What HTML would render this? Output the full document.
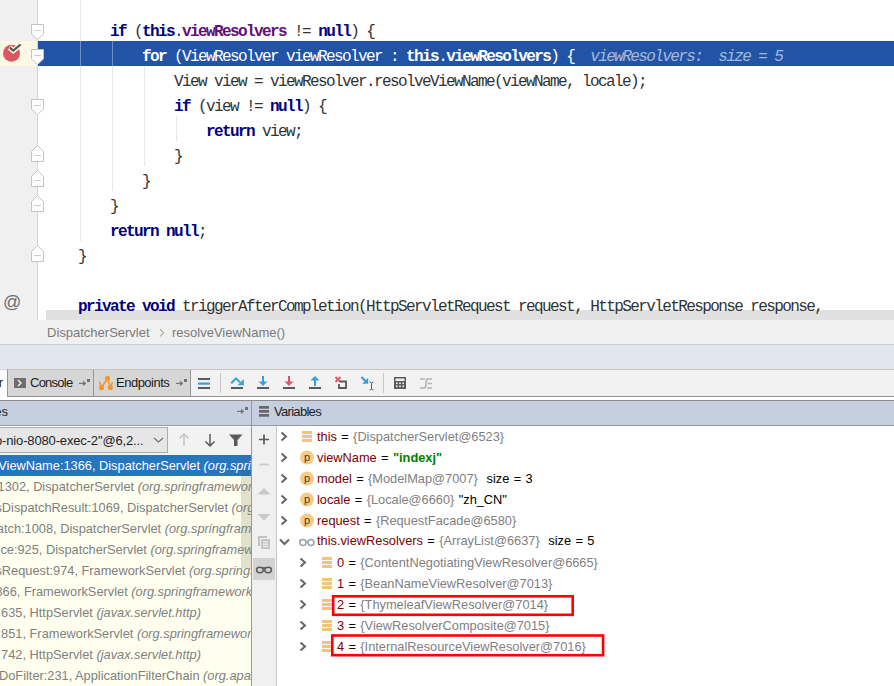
<!DOCTYPE html>
<html><head><meta charset="utf-8">
<style>
*{margin:0;padding:0;box-sizing:border-box}
html,body{width:894px;height:686px;overflow:hidden;background:#fff}
body{position:relative;font-family:"Liberation Sans",sans-serif}
.abs{position:absolute}
#editor{left:0;top:0;width:894px;height:320px;background:#fff;overflow:hidden}
#gutter{left:0;top:0;width:37px;height:320px;background:#f0f0f0}
#gline{left:37px;top:0;width:1px;height:320px;background:#d4d4d4}
.row{position:absolute;left:46px;height:25px;width:848px;white-space:pre;font-family:"Liberation Mono",monospace;font-size:16px;letter-spacing:-1.6px;line-height:25px;padding-top:4px;color:#333}
.row.ex,.row.ex .kw,.row.ex .fld{color:#fff}
.guide.ex{background:#6f8fc6}
.kw{color:#000080;font-weight:bold}
.fld{color:#660e7a;font-weight:bold}
.guide{position:absolute;width:1px;background:#e6e6e6}
#exec{left:38px;top:41px;width:856px;height:25px;background:#2154a6}
#execg{left:0;top:41px;width:37px;height:25px;background:#fdf8e6}
.inl{color:#a8b6d8;font-style:italic;font-weight:normal}
#hscroll{left:46px;top:310px;width:848px;height:10px;background:#e0e0e0}
#crumbs{left:0;top:320px;width:894px;height:25px;background:#f0f0f0;border-bottom:1px solid #c9c9c9}
.ui{font-family:"Liberation Sans",sans-serif;font-size:13px;white-space:pre;position:absolute}
#titlebar{left:0;top:345px;width:894px;height:25px;background:#e2e6ee;border-bottom:1px solid #cfd3da}
#tabs{left:0;top:370px;width:894px;height:30px;background:#fff}
#toolbar{left:190px;top:369px;width:704px;height:28px;background:#f2f2f2;border:1px solid #959595;border-top-color:#c6c6c6;border-right:none}
.tab{position:absolute;top:369px;height:28px;background:#d6d6d6;border:1px solid #959595;border-top-color:#c6c6c6}
#hdrline{left:0;top:400px;width:894px;height:1px;background:#8c8c8c}
#hdr{left:0;top:401px;width:894px;height:25px;background:#c5cfdf;border-bottom:1px solid #959ba5}
#frames{left:0;top:426px;width:251px;height:260px;background:#fffff0}
#combo-row{left:0;top:426px;width:251px;height:29px;background:#f2f2f2;border-top:1px solid #fff}
#divider{left:251px;top:401px;width:1px;height:285px;background:#999}
#vtool{left:252px;top:426px;width:25px;height:260px;background:#f0f0f0;border-right:1px solid #c8c8c8}
.fr{line-height:21px;font-size:12.8px}
.var{font-size:12.8px;line-height:16px;color:#000;word-spacing:0.8px}
.vn{color:#800000}
.vg{color:#808080}
.vs{color:#008000}
#vars{left:277px;top:426px;width:617px;height:260px;background:#fff}
</style></head><body>

<div id="editor" class="abs">
  <div id="gutter" class="abs"></div>
  <div id="execg" class="abs"></div>
  <div id="gline" class="abs"></div>
  <div id="exec" class="abs"></div>
  <svg class="abs" style="left:0;top:0" width="60" height="320"><path d="M31.5,24.5H43.5V34L37.5,39.5L31.5,34Z" fill="#fff" stroke="#c4c4c4"/><path d="M34,30.5H41" stroke="#cdcdcd"/><path d="M31.5,49.5H43.5V59L37.5,64.5L31.5,59Z" fill="#fff" stroke="#c4c4c4"/><path d="M34,55.5H41" stroke="#cdcdcd"/><path d="M31.5,99.5H43.5V109L37.5,114.5L31.5,109Z" fill="#fff" stroke="#c4c4c4"/><path d="M34,105.5H41" stroke="#cdcdcd"/><path d="M31.5,161.5H43.5V151.5L37.5,145.5L31.5,151.5Z" fill="#fff" stroke="#c4c4c4"/><path d="M34,155.5H41" stroke="#cdcdcd"/><path d="M31.5,186.5H43.5V176.5L37.5,170.5L31.5,176.5Z" fill="#fff" stroke="#c4c4c4"/><path d="M34,180.5H41" stroke="#cdcdcd"/><path d="M31.5,211.5H43.5V201.5L37.5,195.5L31.5,201.5Z" fill="#fff" stroke="#c4c4c4"/><path d="M34,205.5H41" stroke="#cdcdcd"/><path d="M31.5,261.5H43.5V251.5L37.5,245.5L31.5,251.5Z" fill="#fff" stroke="#c4c4c4"/><path d="M34,255.5H41" stroke="#cdcdcd"/><circle cx="11.5" cy="53.3" r="8.5" fill="#db5860"/><path d="M9.5,47.5L13.3,50.8L20.8,44.3" stroke="#fdf8e6" stroke-width="5" fill="none"/><path d="M9.8,47.6L13.3,50.6L20.6,44.5" stroke="#555" stroke-width="2.2" fill="none"/></svg>
  <div class="abs" style="left:3px;top:290px;width:19px;height:25px;font:18px 'Liberation Sans';color:#6e6e6e;line-height:25px">@</div>
  <div id="hscroll" class="abs"></div>
  <div class="guide" style="left:80px;top:0;height:41px"></div>
  <div class="guide" style="left:80px;top:66px;height:175px"></div>
  <div class="guide ex" style="left:80px;top:41px;height:25px"></div>
  <div class="guide ex" style="left:112px;top:41px;height:25px"></div>
  <div class="guide" style="left:112px;top:66px;height:125px"></div>
  <div class="guide" style="left:144px;top:66px;height:100px"></div>
  <div class="guide" style="left:176px;top:116px;height:25px"></div>
  <div class="row" style="top:16px">        <span class="kw">if</span> (<span class="kw">this</span>.<span class="fld">viewResolvers</span> != <span class="kw">null</span>) {</div>
  <div class="row ex" style="top:41px">            <span class="kw">for</span> (ViewResolver viewResolver : <span class="kw">this</span>.<span class="fld">viewResolvers</span>) {  <span class="inl">viewResolvers:  size = 5</span></div>
  <div class="row" style="top:66px">                View view = viewResolver.resolveViewName(viewName, locale);</div>
  <div class="row" style="top:91px">                <span class="kw">if</span> (view != <span class="kw">null</span>) {</div>
  <div class="row" style="top:116px">                    <span class="kw">return</span> view;</div>
  <div class="row" style="top:141px">                }</div>
  <div class="row" style="top:166px">            }</div>
  <div class="row" style="top:191px">        }</div>
  <div class="row" style="top:216px">        <span class="kw">return null</span>;</div>
  <div class="row" style="top:241px">    }</div>
  <div class="row" style="top:291px">    <span class="kw">private void</span> triggerAfterCompletion(HttpServletRequest request, HttpServletResponse response,</div>
</div>

<div id="crumbs" class="abs">
  <div class="ui" style="left:47px;top:5px;color:#7a7a7a;line-height:16px">DispatcherServlet</div>
  <svg class="abs" style="left:158px;top:8px" width="8" height="10"><path d="M2.2,1.2L5.5,4.8L2.2,8.4" stroke="#a8a8a8" stroke-width="1.1" fill="none"/></svg>
  <div class="ui" style="left:172px;top:5px;color:#7a7a7a;line-height:16px">resolveViewName()</div>
</div>
<div id="titlebar" class="abs"></div>
<div id="tabs" class="abs"></div>
<div class="tab" style="left:7px;width:87px"></div>
<div class="tab" style="left:93px;width:98px"></div>
<div id="toolbar" class="abs"></div>
<!-- Console tab -->
<svg class="abs" style="left:14px;top:378px" width="12" height="10"><rect width="12" height="10" fill="#6e6e6e"/><path d="M4,2L7,5L4,8" stroke="#e8e8e8" stroke-width="1.6" fill="none"/></svg>
<div class="ui" style="left:30px;top:375px;line-height:16px;color:#1e1e1e;letter-spacing:-0.75px">Console</div>
<div class="ui" style="left:-54px;top:375px;line-height:16px;color:#1e1e1e">Debugger</div>
<svg class="abs" style="left:79px;top:377px" width="12" height="10"><path d="M0,6.4H5" stroke="#707070" stroke-width="1.1"/><path d="M4.3,4.2L7,6.4L4.3,8.6Z" fill="#707070" stroke="#707070" stroke-width="0.6"/><rect x="8" y="2" width="3" height="3" fill="#707070"/></svg>
<!-- Endpoints tab -->
<svg class="abs" style="left:94px;top:370px" width="22" height="24"><g stroke="#f4952c" stroke-width="1.6" fill="none"><path d="M5.4,11.4L7.5,17.7L13.5,8.2L16.4,17.7L18.5,12.2"/></g><g fill="#f4952c"><circle cx="13.5" cy="8.2" r="2.5"/><circle cx="7.5" cy="17.7" r="2.5"/><circle cx="16.4" cy="17.7" r="2.5"/></g></svg>
<div class="ui" style="left:116px;top:375px;line-height:16px;color:#1e1e1e;letter-spacing:-0.5px">Endpoints</div>
<svg class="abs" style="left:176px;top:377px" width="12" height="10"><path d="M0,6.4H5" stroke="#707070" stroke-width="1.1"/><path d="M4.3,4.2L7,6.4L4.3,8.6Z" fill="#707070" stroke="#707070" stroke-width="0.6"/><rect x="8" y="2" width="3" height="3" fill="#707070"/></svg>
<!-- toolbar icons -->
<svg class="abs" style="left:190px;top:369px" width="260" height="28">
  <rect x="8" y="9" width="12" height="2" fill="#5a5a5a"/><rect x="8" y="13.5" width="12" height="2.2" fill="#389fd6"/><rect x="8" y="18" width="12" height="2" fill="#5a5a5a"/>
  <rect x="30" y="4" width="1" height="20" fill="#c8c8c8"/>
  <path d="M41.2,14.2L46,9.4L50,13.4" stroke="#389fd6" stroke-width="2" fill="none"/><path d="M47.5,16.2L53.8,16.2L53.8,9.9Z" fill="#389fd6"/><rect x="41" y="18" width="12" height="2" fill="#5a5a5a"/>
  <path d="M73,7V14" stroke="#389fd6" stroke-width="2"/><path d="M68.5,12.5L73,17L77.5,12.5Z" fill="#389fd6"/><rect x="67" y="18" width="12" height="2" fill="#5a5a5a"/>
  <path d="M99,7V14" stroke="#db5860" stroke-width="2"/><path d="M94.5,12.5L99,17L103.5,12.5Z" fill="#db5860"/><rect x="93" y="18" width="12" height="2" fill="#5a5a5a"/>
  <path d="M125,17V10" stroke="#389fd6" stroke-width="2"/><path d="M120.5,11.5L125,7L129.5,11.5Z" fill="#389fd6"/><rect x="119" y="18" width="12" height="2" fill="#5a5a5a"/>
  <path d="M145.5,8L150.5,13M150.5,8L145.5,13" stroke="#db5860" stroke-width="1.8"/><path d="M150,12.5H156V19H149V15" stroke="#5a5a5a" stroke-width="1.8" fill="none"/>
  <path d="M171.5,8L176,12.5" stroke="#389fd6" stroke-width="2.2"/><path d="M178.2,8.8V14.8H172.2Z" fill="#389fd6"/><path d="M179.5,13.2Q181,13.2 181.5,14.2Q182,13.2 183.5,13.2M181.5,14.2V20M179.5,21Q181,21 181.5,20Q182,21 183.5,21" stroke="#5a5a5a" stroke-width="1" fill="none"/>
  <rect x="193" y="4" width="1" height="20" fill="#c8c8c8"/>
  <rect x="204" y="8" width="12" height="12" fill="#5a5a5a"/><rect x="205.5" y="9.5" width="9" height="2.5" fill="#f2f2f2"/><g fill="#f2f2f2"><rect x="206" y="13.5" width="1.6" height="1.6"/><rect x="209.2" y="13.5" width="1.6" height="1.6"/><rect x="212.4" y="13.5" width="1.6" height="1.6"/><rect x="206" y="16.5" width="1.6" height="1.6"/><rect x="209.2" y="16.5" width="1.6" height="1.6"/><rect x="212.4" y="16.5" width="1.6" height="1.6"/></g>
  <g stroke="#b4b4b4" stroke-width="1.6" fill="none"><path d="M230,10H235M230,19H234"/><path d="M237,10H242M237.5,14.5H242M237,19H242"/><path d="M234,19Q236,19 236,14.5Q236,10 238,10"/></g>
</svg>
<div id="hdrline" class="abs"></div>
<div id="hdr" class="abs">
  <div class="ui" style="left:-36px;top:3px;line-height:16px;color:#1e1e1e">Frames</div>
  <svg class="abs" style="left:237px;top:4px" width="12" height="10"><path d="M0,6.4H5" stroke="#707070" stroke-width="1.1"/><path d="M4.3,4.2L7,6.4L4.3,8.6Z" fill="#707070" stroke="#707070" stroke-width="0.6"/><rect x="8" y="2" width="3" height="3" fill="#707070"/></svg>
  <svg class="abs" style="left:259px;top:5px" width="11" height="12"><g fill="#666"><rect y="0" width="10" height="2.7"/><rect y="4" width="10" height="2.7"/><rect y="8" width="10" height="2.7"/></g></svg>
  <div class="ui" style="left:274px;top:3px;line-height:16px;color:#1e1e1e;letter-spacing:-0.7px">Variables</div>
</div>
<div id="frames" class="abs"></div>
<div id="combo-row" class="abs"></div>
<div class="abs" style="left:-2px;top:427px;width:170px;height:26px;background:#e6e6e6;border:1px solid #adadad"></div>
<div class="ui" style="left:-5px;top:433px;line-height:16px;color:#1e1e1e;letter-spacing:-0.15px">o-nio-8080-exec-2"@6,2...</div>
<svg class="abs" style="left:153px;top:437px" width="11" height="8"><path d="M1,1L5.5,5L10,1" stroke="#707070" stroke-width="1.1" fill="none"/></svg>
<svg class="abs" style="left:176px;top:432px" width="70" height="16">
  <path d="M8,14V2M3.5,6.5L8,2L12.5,6.5" stroke="#c4c4c4" stroke-width="1.5" fill="none"/>
  <path d="M34,2V14M29.5,9.5L34,14L38.5,9.5" stroke="#5a5a5a" stroke-width="1.5" fill="none"/>
  <path d="M53,2.5H66.5L61.5,8V14H58V8Z" fill="#5a5a5a"/>
</svg>
<div id="divider" class="abs"></div>
<div id="vtool" class="abs"></div>
<div id="vars" class="abs"></div>
<div class="abs" style="left:0;top:455px;width:251px;height:231px;overflow:hidden">
<div class="abs" style="left:0;top:0;width:251px;height:21px;background:#2675bf"></div>
<div class="abs" style="left:241px;top:0;width:10px;height:113px;background:#e2e1cb"></div>
<div class="abs" style="left:241px;top:0;width:10px;height:21px;background:#2f72b3"></div>
<div class="ui fr" style="left:-43px;top:0px;color:#fff">resolveViewName:1366, DispatcherServlet <i>(org.springframework.web.servlet)</i></div>
<div class="ui fr" style="left:-43px;top:21px;color:#808080">render:1302, DispatcherServlet <i>(org.springframework.web.servlet)</i></div>
<div class="ui fr" style="left:-43px;top:42px;color:#808080">processDispatchResult:1069, DispatcherServlet <i>(org.springframework.web.servlet)</i></div>
<div class="ui fr" style="left:-43px;top:63px;color:#808080">doDispatch:1008, DispatcherServlet <i>(org.springframework.web.servlet)</i></div>
<div class="ui fr" style="left:-43px;top:84px;color:#808080">doService:925, DispatcherServlet <i>(org.springframework.web.servlet)</i></div>
<div class="ui fr" style="left:-43px;top:105px;color:#808080">processRequest:974, FrameworkServlet <i>(org.springframework.web.servlet)</i></div>
<div class="ui fr" style="left:-43px;top:126px;color:#808080">doGet:866, FrameworkServlet <i>(org.springframework.web.servlet)</i></div>
<div class="ui fr" style="left:-43px;top:147px;color:#808080">service:635, HttpServlet <i>(javax.servlet.http)</i></div>
<div class="ui fr" style="left:-43px;top:168px;color:#808080">service:851, FrameworkServlet <i>(org.springframework.web.servlet)</i></div>
<div class="ui fr" style="left:-43px;top:189px;color:#808080">service:742, HttpServlet <i>(javax.servlet.http)</i></div>
<div class="ui fr" style="left:-43px;top:210px;color:#808080">internalDoFilter:231, ApplicationFilterChain <i>(org.apache.catalina.core)</i></div>
</div>
<svg class="abs" style="left:252px;top:426px" width="24" height="160">
  <path d="M12,8.5V18.5M7,13.5H17" stroke="#5a5a5a" stroke-width="1.7"/>
  <path d="M7.5,38.5H17" stroke="#c8c8c8" stroke-width="1.7"/>
  <path d="M5.5,68.5L12,62L18.5,68.5Z" fill="#c8c8c8"/>
  <path d="M5.5,88L12,94.5L18.5,88Z" fill="#c8c8c8"/>
  <path d="M6,120V110H15V112H8V120Z" fill="#c4c4c4"/><rect x="9" y="113" width="9" height="10" fill="#c4c4c4"/><g fill="#f0f0f0"><rect x="11" y="115.3" width="5" height="1.2"/><rect x="11" y="117.6" width="5" height="1.2"/><rect x="11" y="119.9" width="5" height="1.2"/></g>
  <rect x="1" y="132" width="22" height="22" fill="#d2d2d2"/>
  <g stroke="#5a5a5a" stroke-width="1.6" fill="none"><path d="M4.6,143.5Q4.6,141.2 7.9,141.2Q11.2,141.2 11.2,143.5A3.3,3.3 0 0 1 4.6,143.5Z"/><path d="M12.8,143.5Q12.8,141.2 16.1,141.2Q19.4,141.2 19.4,143.5A3.3,3.3 0 0 1 12.8,143.5Z"/><path d="M11,142H13"/></g>
</svg>
<svg class="abs" style="left:280px;top:431px" width="8" height="11"><path d="M1.5,1.5L6,5.5L1.5,9.5" stroke="#666" stroke-width="2" fill="none"/></svg>
<svg class="abs" style="left:302px;top:431px" width="11" height="11"><g fill="#f2c37e"><rect y="0" width="10" height="3"/><rect y="4" width="10" height="3"/><rect y="8" width="10" height="3"/></g></svg>
<div class="ui var" style="left:317px;top:429px"><span class="vn">this</span> = <span class="vg">{DispatcherServlet@6523}</span></div>
<svg class="abs" style="left:280px;top:452px" width="8" height="11"><path d="M1.5,1.5L6,5.5L1.5,9.5" stroke="#666" stroke-width="2" fill="none"/></svg>
<svg class="abs" style="left:300px;top:450px" width="15" height="15"><circle cx="7" cy="7.5" r="7" fill="#f6cb88"/><text x="7" y="10.5" text-anchor="middle" font-family="Liberation Sans" font-size="11" fill="#4a3d2a">p</text></svg>
<div class="ui var" style="left:317px;top:450px"><span class="vn">viewName</span> = <b class="vs">"indexj"</b></div>
<svg class="abs" style="left:280px;top:473px" width="8" height="11"><path d="M1.5,1.5L6,5.5L1.5,9.5" stroke="#666" stroke-width="2" fill="none"/></svg>
<svg class="abs" style="left:300px;top:471px" width="15" height="15"><circle cx="7" cy="7.5" r="7" fill="#f6cb88"/><text x="7" y="10.5" text-anchor="middle" font-family="Liberation Sans" font-size="11" fill="#4a3d2a">p</text></svg>
<div class="ui var" style="left:317px;top:471px"><span class="vn">model</span> = <span class="vg">{ModelMap@7007}</span>  size = 3</div>
<svg class="abs" style="left:280px;top:494px" width="8" height="11"><path d="M1.5,1.5L6,5.5L1.5,9.5" stroke="#666" stroke-width="2" fill="none"/></svg>
<svg class="abs" style="left:300px;top:492px" width="15" height="15"><circle cx="7" cy="7.5" r="7" fill="#f6cb88"/><text x="7" y="10.5" text-anchor="middle" font-family="Liberation Sans" font-size="11" fill="#4a3d2a">p</text></svg>
<div class="ui var" style="left:317px;top:492px"><span class="vn">locale</span> = <span class="vg">{Locale@6660}</span> "zh_CN"</div>
<svg class="abs" style="left:280px;top:515px" width="8" height="11"><path d="M1.5,1.5L6,5.5L1.5,9.5" stroke="#666" stroke-width="2" fill="none"/></svg>
<svg class="abs" style="left:300px;top:513px" width="15" height="15"><circle cx="7" cy="7.5" r="7" fill="#f6cb88"/><text x="7" y="10.5" text-anchor="middle" font-family="Liberation Sans" font-size="11" fill="#4a3d2a">p</text></svg>
<div class="ui var" style="left:317px;top:513px"><span class="vn">request</span> = <span class="vg">{RequestFacade@6580}</span></div>
<svg class="abs" style="left:279px;top:538px" width="11" height="8"><path d="M1,1.5L5.5,6L10,1.5" stroke="#666" stroke-width="2" fill="none"/></svg>
<svg class="abs" style="left:299px;top:538px" width="16" height="9"><g stroke="#97a5b1" stroke-width="1.6" fill="none"><ellipse cx="4" cy="4.5" rx="3" ry="3"/><ellipse cx="12" cy="4.5" rx="3" ry="3"/><path d="M7,3.5H9M1,3L0.5,1.5"/></g></svg>
<div class="ui var" style="left:317px;top:533px"><span class="vn">this.viewResolvers</span> = <span class="vg">{ArrayList@6637}</span>  size = 5</div>
<svg class="abs" style="left:299px;top:557px" width="8" height="11"><path d="M1.5,1.5L6,5.5L1.5,9.5" stroke="#666" stroke-width="2" fill="none"/></svg>
<svg class="abs" style="left:322px;top:557px" width="11" height="11"><g fill="#f2c37e"><rect y="0" width="10" height="3"/><rect y="4" width="10" height="3"/><rect y="8" width="10" height="3"/></g></svg>
<div class="ui var" style="left:337px;top:555px"><span class="vn">0</span> = <span class="vg">{ContentNegotiatingViewResolver@6665}</span></div>
<svg class="abs" style="left:299px;top:578px" width="8" height="11"><path d="M1.5,1.5L6,5.5L1.5,9.5" stroke="#666" stroke-width="2" fill="none"/></svg>
<svg class="abs" style="left:322px;top:578px" width="11" height="11"><g fill="#f2c37e"><rect y="0" width="10" height="3"/><rect y="4" width="10" height="3"/><rect y="8" width="10" height="3"/></g></svg>
<div class="ui var" style="left:337px;top:576px"><span class="vn">1</span> = <span class="vg">{BeanNameViewResolver@7013}</span></div>
<svg class="abs" style="left:299px;top:599px" width="8" height="11"><path d="M1.5,1.5L6,5.5L1.5,9.5" stroke="#666" stroke-width="2" fill="none"/></svg>
<svg class="abs" style="left:322px;top:599px" width="11" height="11"><g fill="#f2c37e"><rect y="0" width="10" height="3"/><rect y="4" width="10" height="3"/><rect y="8" width="10" height="3"/></g></svg>
<div class="ui var" style="left:337px;top:597px"><span class="vn">2</span> = <span class="vg">{ThymeleafViewResolver@7014}</span></div>
<svg class="abs" style="left:299px;top:620px" width="8" height="11"><path d="M1.5,1.5L6,5.5L1.5,9.5" stroke="#666" stroke-width="2" fill="none"/></svg>
<svg class="abs" style="left:322px;top:620px" width="11" height="11"><g fill="#f2c37e"><rect y="0" width="10" height="3"/><rect y="4" width="10" height="3"/><rect y="8" width="10" height="3"/></g></svg>
<div class="ui var" style="left:337px;top:618px"><span class="vn">3</span> = <span class="vg">{ViewResolverComposite@7015}</span></div>
<svg class="abs" style="left:299px;top:641px" width="8" height="11"><path d="M1.5,1.5L6,5.5L1.5,9.5" stroke="#666" stroke-width="2" fill="none"/></svg>
<svg class="abs" style="left:322px;top:641px" width="11" height="11"><g fill="#f2c37e"><rect y="0" width="10" height="3"/><rect y="4" width="10" height="3"/><rect y="8" width="10" height="3"/></g></svg>
<div class="ui var" style="left:337px;top:639px"><span class="vn">4</span> = <span class="vg">{InternalResourceViewResolver@7016}</span></div>
<svg class="abs" style="left:0;top:0" width="894" height="686" pointer-events="none"><g stroke="#ff0000" stroke-width="2.6" fill="none"><rect x="333.2" y="596.3" width="239.5" height="18.5"/><rect x="332.3" y="635.5" width="270.8" height="19.7"/></g></svg>

</body></html>
